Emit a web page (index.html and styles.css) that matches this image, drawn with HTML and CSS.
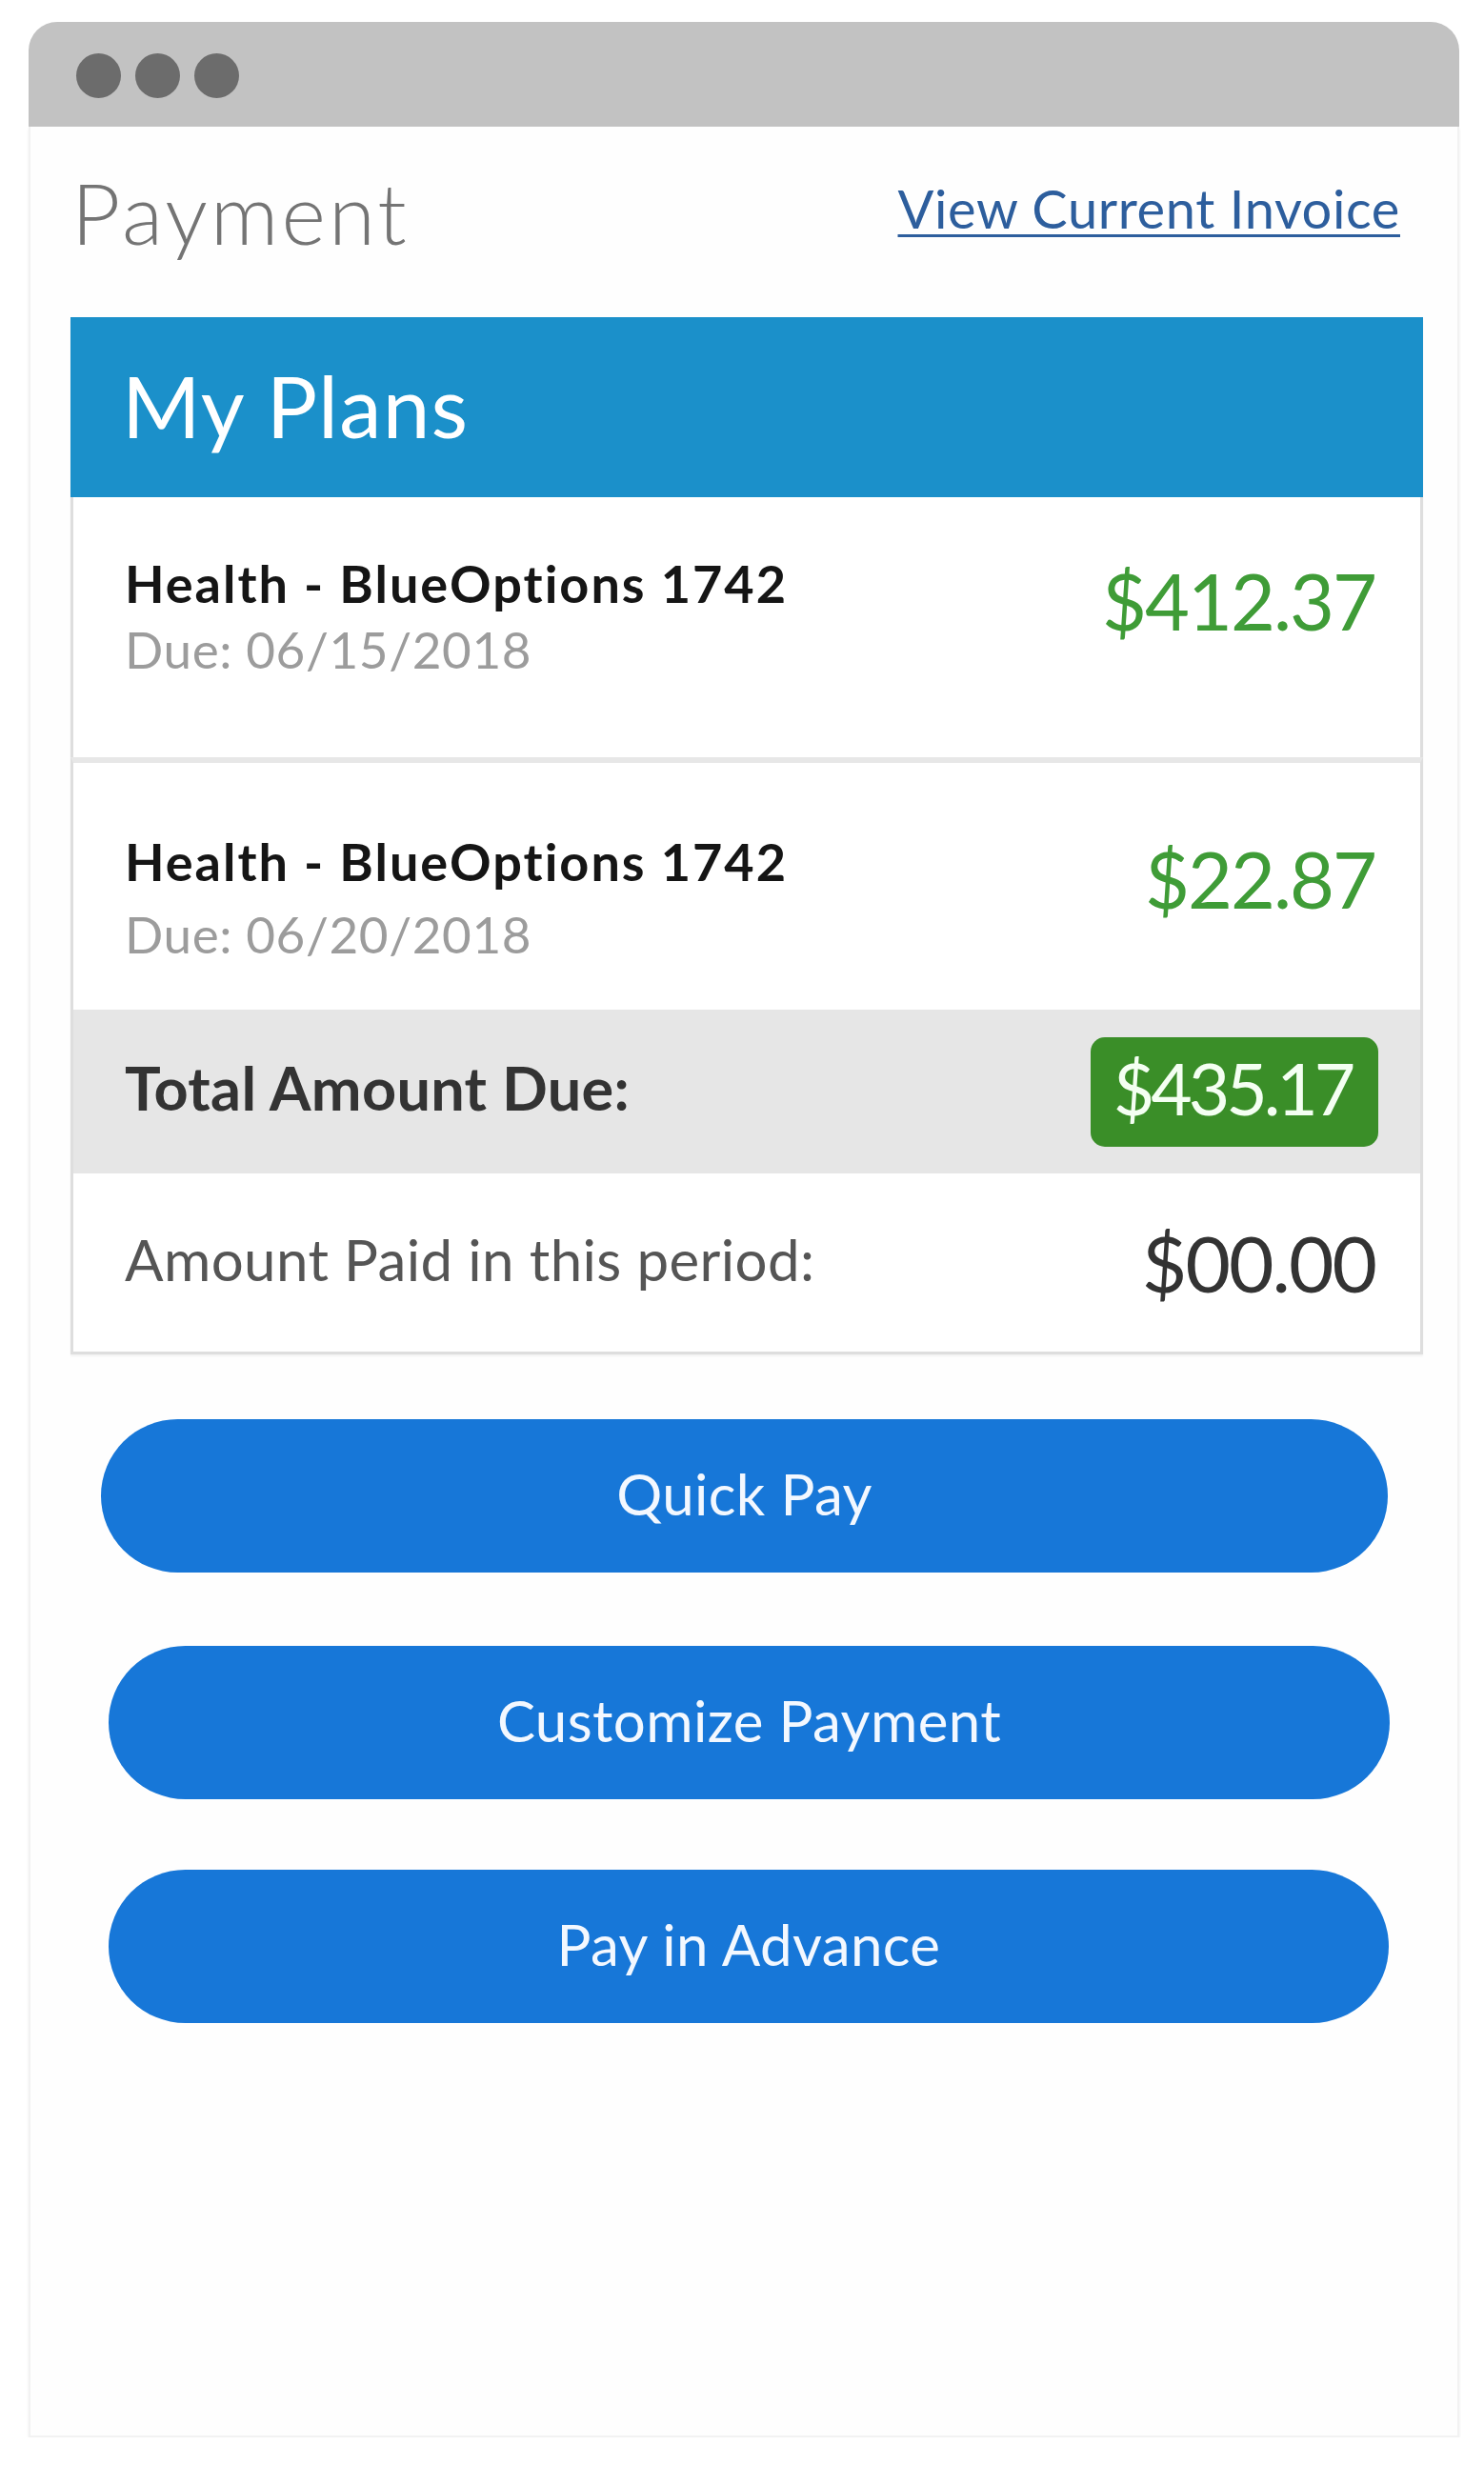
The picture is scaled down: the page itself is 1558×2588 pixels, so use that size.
FILE: index.html
```html
<!DOCTYPE html>
<html lang="en">
<head>
<meta charset="utf-8">
<title>Payment</title>
<link rel="stylesheet" href="styles.css">
</head>
<body>
<div class="window">
  <div class="titlebar">
    <span class="dot"></span><span class="dot"></span><span class="dot"></span>
  </div>
  <div class="screen">
    <div class="page-head">
      <h1 class="page-title">Payment</h1>
      <a class="invoice-link" href="#">View Current Invoice</a>
    </div>

    <section class="card">
      <div class="card-head">My Plans</div>
      <div class="plan plan-first">
        <div class="plan-info">
          <div class="plan-name">Health - BlueOptions 1742</div>
          <div class="plan-due">Due: 06/15/2018</div>
        </div>
        <div class="plan-amount">$412.37</div>
      </div>
      <div class="plan plan-second">
        <div class="plan-info">
          <div class="plan-name">Health - BlueOptions 1742</div>
          <div class="plan-due plan-due-wide">Due: 06/20/2018</div>
        </div>
        <div class="plan-amount">$22.87</div>
      </div>
      <div class="total-row">
        <div class="total-label">Total Amount Due:</div>
        <div class="total-badge"><span>$435.17</span></div>
      </div>
      <div class="paid-row">
        <div class="paid-label">Amount Paid in this period:</div>
        <div class="paid-amount">$00.00</div>
      </div>
    </section>

    <div class="actions">
      <button class="btn btn-quick">Quick Pay</button>
      <button class="btn btn-custom">Customize Payment</button>
      <button class="btn btn-advance">Pay in Advance</button>
    </div>
  </div>
</div>
</body>
</html>
```

FILE: styles.css
```css
* { box-sizing: border-box; }

html, body {
  margin: 0;
  padding: 0;
  background: #ffffff;
}

body {
  font-family: Lato, "Open Sans", "Liberation Sans", sans-serif;
  padding: 23px 26px 0 30px;
}

.window {
  width: 1502px;
  height: 2536px;
  display: flex;
  flex-direction: column;
}

.titlebar {
  height: 110px;
  flex: none;
  background: #c2c2c2;
  border-radius: 30px 30px 0 0;
  display: flex;
  gap: 15px;
  padding: 33px 0 0 50px;
}

.dot {
  width: 47px;
  height: 47px;
  border-radius: 50%;
  background: #6c6c6c;
}

.screen {
  flex: 1;
  background: #fefefe;
  border: 2px solid #f2f2f2;
  border-top: none;
  box-shadow: 0 2px 3px rgba(0, 0, 0, 0.07);
  padding: 0 36px 0 42px;
}

.page-head {
  display: flex;
  justify-content: space-between;
  align-items: flex-start;
  padding: 45px 24px 0 0;
  height: 200px;
}

.page-title {
  margin: 0;
  font-size: 89px;
  line-height: 1;
  font-weight: 300;
  letter-spacing: 3px;
  color: #747474;
  padding-left: 1px;
}

.invoice-link {
  margin-top: 13px;
  font-size: 56px;
  line-height: 1;
  letter-spacing: 0.6px;
  color: #2d5e9d;
  text-decoration: underline;
  text-decoration-thickness: 3px;
  text-underline-offset: 6px;
}

.card {
  width: 1420px;
  box-shadow: 0 2px 2px rgba(0, 0, 0, 0.05);
}

.card-head {
  background: #1b90ca;
  color: #ffffff;
  height: 189px;
  padding: 48px 0 0 54px;
  font-size: 89px;
  line-height: 1;
  font-weight: 400;
  letter-spacing: 1.2px;
}

.plan,
.total-row,
.paid-row {
  display: flex;
  justify-content: space-between;
  border-left: 3px solid #dedede;
  border-right: 3px solid #dedede;
  padding-left: 54px;
  padding-right: 47px;
}

.plan {
  align-items: flex-start;
  background: #ffffff;
}

.plan-first {
  height: 273px;
  padding-top: 64px;
}

.plan-second {
  height: 265px;
  border-top: 6px solid #e7e7e7;
  padding-top: 77px;
}

.plan-name {
  font-size: 54px;
  line-height: 1;
  font-weight: 700;
  letter-spacing: 2px;
  color: #151515;
}

.plan-due {
  margin-top: 15px;
  font-size: 53px;
  line-height: 1;
  letter-spacing: 0.6px;
  color: #9c9c9c;
}

.plan-due-wide {
  margin-top: 22px;
}

.plan-amount {
  margin-top: 4px;
  font-size: 81px;
  line-height: 1;
  letter-spacing: -2px;
  color: #3f9c37;
}

.total-row {
  height: 172px;
  align-items: center;
  background: #e6e6e6;
  padding-right: 44px;
}

.total-label {
  margin-bottom: 10px;
  font-size: 63px;
  line-height: 1;
  font-weight: 700;
  letter-spacing: 0.3px;
  color: #333333;
}

.total-badge {
  width: 302px;
  height: 115px;
  border-radius: 15px;
  background: #3a8e28;
  color: #f4fff2;
  display: flex;
  align-items: center;
  justify-content: center;
  font-size: 75px;
  line-height: 1;
  letter-spacing: -4px;
  padding: 0 4px 8px 0;
}

.paid-row {
  height: 190px;
  align-items: flex-start;
  background: #ffffff;
  border-bottom: 3px solid #dedede;
  padding-top: 52px;
}

.paid-label {
  margin-top: 8px;
  font-size: 60px;
  line-height: 1;
  font-weight: 400;
  letter-spacing: 0.4px;
  color: #555555;
}

.paid-amount {
  font-size: 82px;
  line-height: 1;
  letter-spacing: -2px;
  color: #333333;
}

.actions {
  display: flex;
  flex-direction: column;
  align-items: flex-start;
  padding-top: 68px;
}

.btn {
  height: 161px;
  border: none;
  border-radius: 81px;
  background: #1777d8;
  color: #f3f8ff;
  font-family: Lato, "Open Sans", "Liberation Sans", sans-serif;
  font-size: 60px;
  font-weight: 400;
  line-height: 1;
  letter-spacing: 0.4px;
  padding: 0 0 6px 0;
}

.btn-quick {
  width: 1351px;
  margin-left: 32px;
}

.btn-custom {
  width: 1345px;
  margin-left: 40px;
  margin-top: 77px;
}

.btn-advance {
  width: 1344px;
  margin-left: 40px;
  margin-top: 74px;
}
```
